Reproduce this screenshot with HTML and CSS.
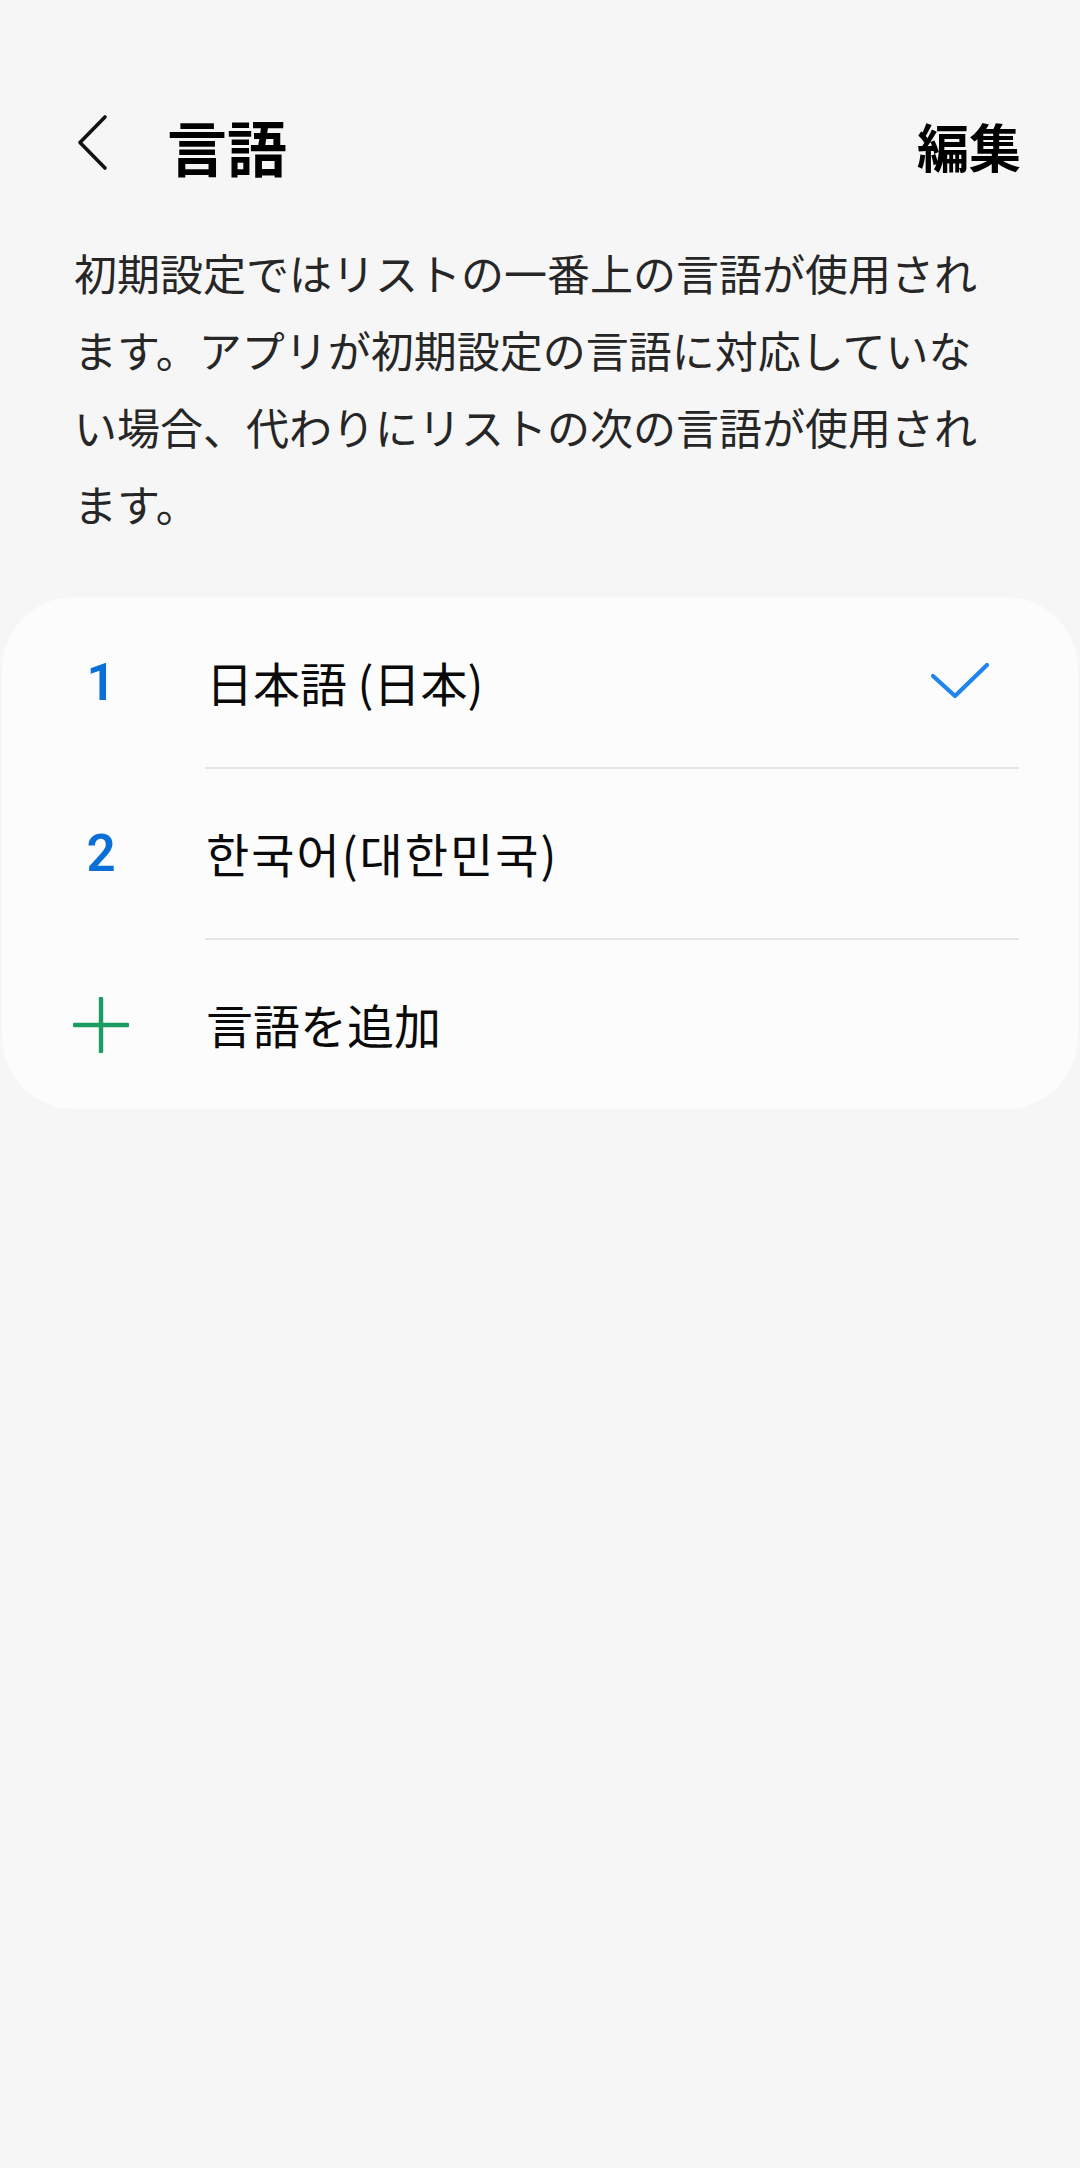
FILE: index.html
```html
<!DOCTYPE html>
<html lang="ja">
<head>
<meta charset="utf-8">
<title>言語</title>
<link rel="stylesheet" href="styles.css">
</head>
<body>
<div class="page">
  <header class="header">
    <svg class="back" width="34" height="58" viewBox="0 0 34 58" aria-hidden="true">
      <polyline points="29,3 4,28.5 29,54" fill="none" stroke="#111" stroke-width="3.6" stroke-linecap="round" stroke-linejoin="round"/>
    </svg>
    <h1 class="title">言語</h1>
    <span class="edit">編集</span>
  </header>

  <p class="desc">初期設定ではリストの一番上の言語が使用されます。アプリが初期設定の言語に対応していない場合、代わりにリストの次の言語が使用されます。</p>

  <section class="card">
    <div class="row">
      <span class="lead num">1</span>
      <span class="label">日本語 (日本)</span>
      <svg class="check" width="62" height="44" viewBox="0 0 62 44" aria-hidden="true">
        <polyline points="4,15 26,35 58,4" fill="none" stroke="#1f84ec" stroke-width="4.2" stroke-linecap="round" stroke-linejoin="round"/>
      </svg>
    </div>
    <div class="divider"></div>
    <div class="row">
      <span class="lead num">2</span>
      <span class="label ko">한국어(대한민국)</span>
    </div>
    <div class="divider"></div>
    <div class="row">
      <span class="lead">
        <svg width="56" height="56" viewBox="0 0 56 56" aria-hidden="true">
          <path d="M28 1.5V54.5M1.5 28H54.5" fill="none" stroke="#1b9c62" stroke-width="4.4" stroke-linecap="round"/>
        </svg>
      </span>
      <span class="label">言語を追加</span>
    </div>
  </section>
</div>
</body>
</html>
```

FILE: styles.css
```css
html, body {
  margin: 0;
  padding: 0;
  background: #f6f6f6;
}

body {
  width: 1080px;
  min-height: 2168px;
  font-family: "Noto Sans CJK JP", "Noto Sans", sans-serif;
  color: #111;
}

.page {
  padding-top: 96px;
}

.header {
  display: flex;
  align-items: center;
  height: 100px;
  padding-left: 76px;
  padding-right: 59px;
}

.back {
  flex: none;
  margin-bottom: 6px;
}

.title {
  margin: 0 0 0 57px;
  font-size: 60px;
  font-weight: 700;
  line-height: 1;
  color: #000;
  flex: 1;
}

.edit {
  font-size: 52px;
  font-weight: 700;
  line-height: 1;
  color: #000;
}

.desc {
  margin: 38px 74px 0 74px;
  font-size: 43px;
  line-height: 77px;
  color: #262626;
  font-weight: 400;
}

.card {
  margin: 55px 2px 0 2px;
  padding-top: 1px;
  background: #fcfcfc;
  border-radius: 72px;
}

.row {
  display: flex;
  align-items: center;
  height: 169px;
}

.lead {
  flex: none;
  width: 94px;
  margin-left: 52px;
  margin-right: 58px;
  display: flex;
  justify-content: center;
  align-items: center;
}

.num {
  font-family: Roboto, "Noto Sans", sans-serif;
  font-size: 51px;
  font-weight: 600;
  color: #0b6fd8;
  line-height: 1;
}

.label {
  flex: 1;
  font-size: 47px;
  line-height: 1.2;
  color: #0a0a0a;
}

.label.ko {
  font-family: "Noto Sans CJK KR", "Noto Sans CJK JP", sans-serif;
  font-size: 47px;
  letter-spacing: 2px;
}

.check {
  flex: none;
  margin-right: 87px;
}

.divider {
  height: 2px;
  margin-left: 203px;
  margin-right: 59px;
  background: #e5e5e5;
}
```
